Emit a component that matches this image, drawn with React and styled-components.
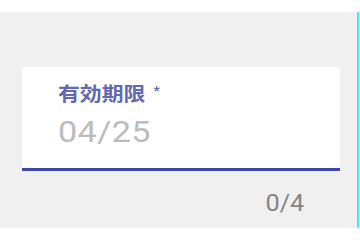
import React from "react";
import styled, { createGlobalStyle } from "styled-components";

const GlobalStyle = createGlobalStyle`
  html, body {
    margin: 0;
    padding: 0;
    background: #fff;
  }
  body {
    font-family: Roboto, "Noto Sans CJK JP", sans-serif;
  }
`;

const Screen = styled.div`
  width: 360px;
  height: 240px;
  display: flex;
  flex-direction: column;
  background: #fff;
`;

const Strip = styled.div`
  height: ${(p) => p.size}px;
  flex: none;
`;

const Panel = styled.div`
  flex: 1;
  margin-right: 1px;
  border-right: 2px solid #34f2e6;
  background: #f0f0f0;
  display: flex;
  flex-direction: column;
  padding: 55px 17px 0 22px;
`;

const Field = styled.div`
  box-sizing: border-box;
  height: 104px;
  background: #fff;
  border-radius: 4px 4px 0 0;
  border-bottom: 3px solid #3d47a7;
  padding: 15px 0 0 36px;
  display: flex;
  flex-direction: column;
  align-items: flex-start;
`;

/* the source screen is stretched sideways, hence the scaleX */
const Label = styled.div`
  font-family: "Noto Sans CJK JP", sans-serif;
  font-size: 19px;
  line-height: 22px;
  font-weight: 700;
  color: #6468ae;
  display: flex;
  align-items: flex-start;
  transform: scaleX(1.15);
  transform-origin: left center;
`;

const Required = styled.span`
  font-family: Roboto, sans-serif;
  font-size: 12px;
  line-height: 14px;
  margin-left: 7px;
  margin-top: 2px;
`;

const Value = styled.div`
  margin-top: 11px;
  font-family: Roboto, sans-serif;
  font-size: 29px;
  line-height: 34px;
  letter-spacing: 0.3px;
  color: #bcbcbc;
  transform: scaleX(1.18);
  transform-origin: left center;
`;

const Counter = styled.div`
  margin-top: 19px;
  padding-right: 36px;
  display: flex;
  justify-content: flex-end;
`;

const CounterText = styled.span`
  font-family: Roboto, sans-serif;
  font-size: 23px;
  line-height: 27px;
  color: #858585;
  transform: scaleX(1.1);
  transform-origin: right center;
`;

export default function App() {
  return (
    <Screen>
      <GlobalStyle />
      <Strip size={12} />
      <Panel>
        <Field>
          <Label>
            有効期限<Required>*</Required>
          </Label>
          <Value>04/25</Value>
        </Field>
        <Counter>
          <CounterText>0/4</CounterText>
        </Counter>
      </Panel>
      <Strip size={12} />
    </Screen>
  );
}
